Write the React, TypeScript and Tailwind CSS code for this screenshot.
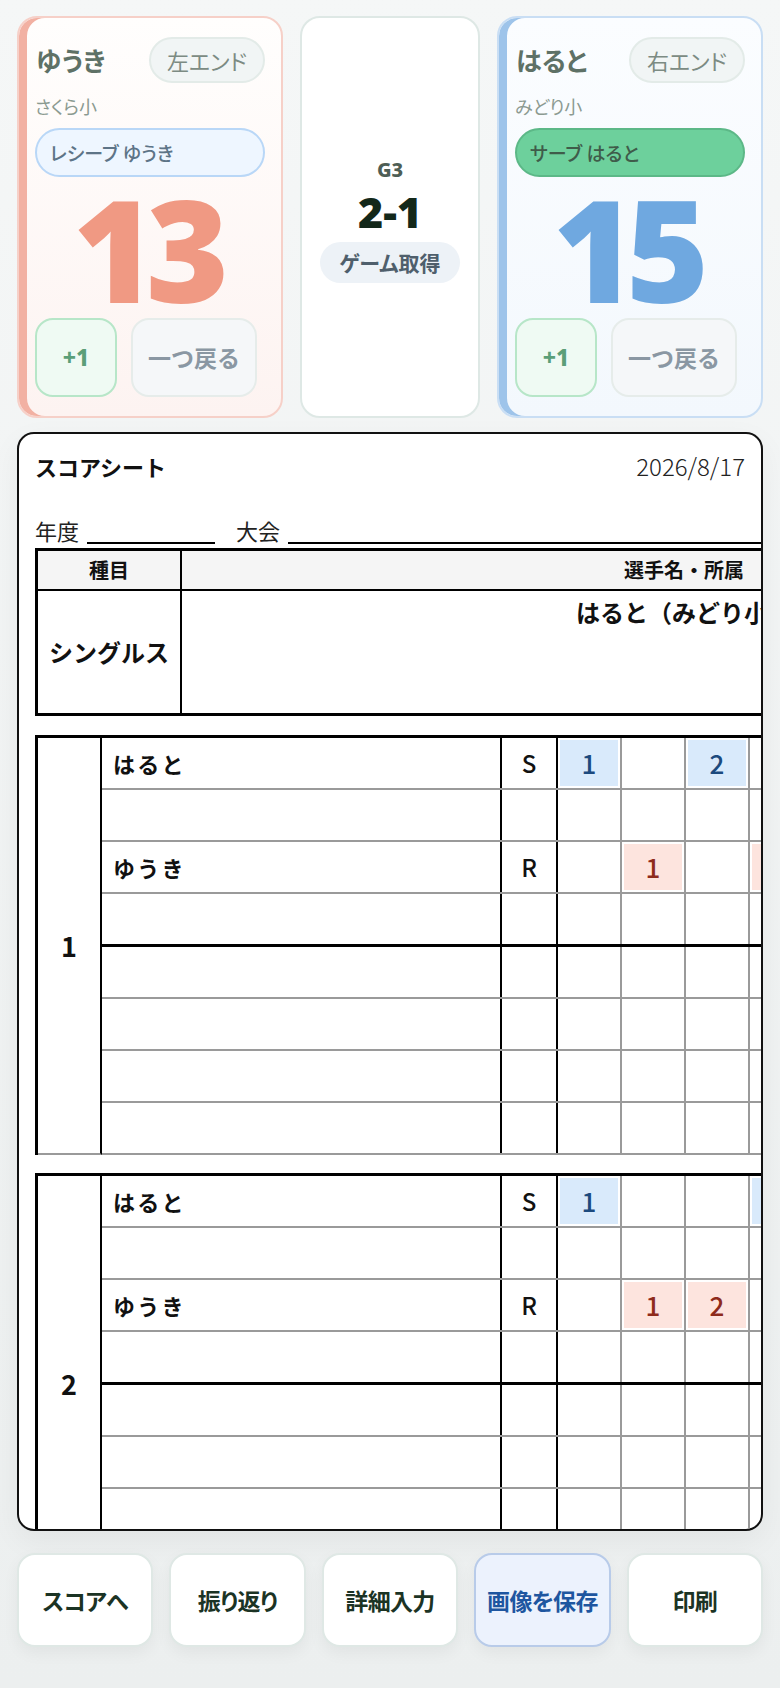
import React from 'react';

type Side = 'left' | 'right';

function PlayerCard(props: {
  side: Side;
  name: string;
  end: string;
  school: string;
  serveLabel: string;
  serving: boolean;
  score: number;
}) {
  const { side, name, end, school, serveLabel, serving, score } = props;
  const cardCls =
    side === 'left'
      ? 'border-[#f6d0c8] bg-gradient-to-b from-[#fffefd] to-[#fdf3f1] shadow-[inset_8px_0_0_0_#f2b1a3]'
      : 'border-[#c9def4] bg-gradient-to-b from-[#fbfdff] to-[#f3f8fd] shadow-[inset_8px_0_0_0_#9ec4ea]';
  const scoreCls = side === 'left' ? 'text-[#f09983]' : 'text-[#6fa8e0]';
  const pillCls = serving
    ? 'bg-[#6dd09c] border-[#5cb887] text-[#3f5c4a]'
    : 'bg-[#eef6ff] border-[#b9d7f7] text-[#5d7487]';
  return (
    <div className={`h-[402px] rounded-[20px] border-2 px-4 pt-[19px] pb-[19px] flex flex-col ${cardCls}`}>
      <div className="flex items-center justify-between h-[46px]">
        <span className="pl-px text-[26px] font-semibold text-[#5e7166] leading-none">{name}</span>
        <span className="h-[46px] px-[16px] flex items-center rounded-full border-2 border-[#e3ebe8] bg-[#f1f5f5] text-[22px] text-[#7c8b83] leading-none">
          {end}
        </span>
      </div>
      <div className="mt-[11px] text-[18px] leading-[24px] text-[#8b9a91]">{school}</div>
      <div className={`mt-[10px] h-[49px] rounded-full border-2 flex items-center pl-[13px] text-[19px] font-medium leading-none ${pillCls}`}>
        {serveLabel}
      </div>
      <div className="h-[141px] flex items-center justify-center">
        <span className={`font-['Noto_Sans',sans-serif] text-[142px] font-black leading-none tracking-[-0.07em] pr-[8px] ${scoreCls}`}>{score}</span>
      </div>
      <div className="flex gap-[14px] h-[79px]">
        <button className="w-[82px] h-full rounded-[18px] border-2 border-[#b7e6c8] bg-[#effaf3] font-['Noto_Sans',sans-serif] text-[23px] font-extrabold text-[#5b9f78]">
          +1
        </button>
        <button className="w-[126px] h-full rounded-[18px] border-2 border-[#e6ecea] bg-[#f5f7f9] text-[23px] font-semibold text-[#8a97a3] [font-feature-settings:normal]">
          一つ戻る
        </button>
      </div>
    </div>
  );
}

function CenterCard() {
  return (
    <div className="h-[402px] rounded-[20px] border-2 border-[#dee8e5] bg-white flex flex-col items-center justify-center pt-[6px]">
      <div className="font-['Noto_Sans',sans-serif] text-[20px] font-extrabold text-[#4e5e55] leading-[24px]">G3</div>
      <div className="mt-[8px] font-['Noto_Sans',sans-serif] text-[43px] font-black text-[#13281a] leading-[44px]">2-1</div>
      <div className="mt-[8px] h-[41px] w-[140px] rounded-full bg-[#edf2f7] flex items-center justify-center text-[21px] font-semibold text-[#4f5f6c] leading-none">
        ゲーム取得
      </div>
    </div>
  );
}

type Marks = { [col: number]: string };

function ScoreCell({ v, kind }: { v?: string; kind: 'S' | 'R' }) {
  return (
    <div className="w-[64px] h-full shrink-0 border-r-2 border-[#9a9a9a] p-[2px]">
      {v ? (
        <div
          className={
            kind === 'S'
              ? 'h-full flex items-center justify-center bg-[#d9eafb] text-[#1c4a7e] text-[26px] font-medium leading-none'
              : 'h-full flex items-center justify-center bg-[#fde4de] text-[#8e2b1c] text-[26px] font-medium leading-none'
          }
        >
          {v}
        </div>
      ) : null}
    </div>
  );
}

function GameRow({
  idx,
  name,
  role,
  marks,
}: {
  idx: number;
  name?: string;
  role?: 'S' | 'R';
  marks?: Marks;
}) {
  const cols = Array.from({ length: 10 }, (_, i) => i + 1);
  return (
    <div
      className={
        idx === 3
          ? 'flex h-[53px] border-b-[3px] border-black'
          : 'flex h-[52px] border-b-2 border-[#9a9a9a]'
      }
    >
      <div className="w-[400px] shrink-0 h-full border-r-2 border-black pl-[11px] flex items-center text-[22px] font-bold tracking-[0.1em] leading-none text-[#111]">
        {name}
      </div>
      <div className="w-[56px] shrink-0 h-full border-r-2 border-black flex items-center justify-center text-[24px] font-medium leading-none text-[#111]">
        {role}
      </div>
      {cols.map((c) => (
        <ScoreCell key={c} v={marks ? marks[c] : undefined} kind={role === 'R' ? 'R' : 'S'} />
      ))}
    </div>
  );
}

function GameTable({
  no,
  sMarks,
  rMarks,
  className,
}: {
  no: number;
  sMarks: Marks;
  rMarks: Marks;
  className: string;
}) {
  return (
    <div className={`flex border-t-[3px] border-l-[3px] border-black ${className}`}>
      <div className="w-[64px] shrink-0 border-r-2 border-r-black border-b-2 border-b-[#9a9a9a] flex items-center justify-center text-[27px] font-semibold leading-none text-[#111]">
        {no}
      </div>
      <div className="flex flex-col">
        <GameRow idx={0} name="はると" role="S" marks={sMarks} />
        <GameRow idx={1} />
        <GameRow idx={2} name="ゆうき" role="R" marks={rMarks} />
        <GameRow idx={3} />
        <GameRow idx={4} />
        <GameRow idx={5} />
        <GameRow idx={6} />
        <GameRow idx={7} />
      </div>
    </div>
  );
}

function ScoreSheet() {
  return (
    <div className="mt-[14px] h-[1099px] rounded-[17px] border-2 border-[#111] bg-white overflow-hidden shadow-[0_10px_30px_rgba(0,0,0,0.05)]">
      <div className="px-4 pt-[17px]">
        <div className="flex items-center justify-between leading-[30px]">
          <span className="text-[22px] font-bold text-[#111]">スコアシート</span>
          <span className="text-[24px] font-light text-[#222]">2026/8/17</span>
        </div>
        <div className="w-[1190px]">
          <div className="mt-[35px] flex items-end text-[22px] leading-[28px] text-[#222]">
            <span>年度</span>
            <span className="ml-[8px] w-[128px] h-[26px] border-b-2 border-black"></span>
            <span className="ml-[21px]">大会</span>
            <span className="ml-[8px] w-[900px] h-[26px] border-b-2 border-black"></span>
          </div>
          <div className="mt-[4px] border-[3px] border-black">
            <div className="flex h-[40px] border-b-2 border-black bg-[#f5f5f5]">
              <div className="w-[144px] shrink-0 border-r-2 border-black flex items-center justify-center text-[20px] font-bold text-[#111]">
                種目
              </div>
              <div className="w-[1004px] shrink-0 flex items-center justify-center text-[20px] font-bold text-[#111]">
                選手名・所属
              </div>
            </div>
            <div className="flex h-[122px]">
              <div className="w-[144px] shrink-0 border-r-2 border-black flex items-center justify-center text-[24px] font-bold text-[#111]">
                シングルス
              </div>
              <div className="w-[1004px] shrink-0 pt-[3px] text-center text-[24px] font-bold text-[#111]">
                はると（みどり小）
              </div>
            </div>
          </div>
          <GameTable no={1} sMarks={{ 1: '1', 3: '2', 5: '3' }} rMarks={{ 2: '1', 4: '2' }} className="mt-[19px]" />
          <GameTable no={2} sMarks={{ 1: '1', 4: '2' }} rMarks={{ 2: '1', 3: '2' }} className="mt-[18px]" />
        </div>
      </div>
    </div>
  );
}

function BottomButtons() {
  const items = ['スコアへ', '振り返り', '詳細入力', '画像を保存', '印刷'];
  return (
    <div className="mt-[22px] grid grid-cols-5 gap-[16px]">
      {items.map((t) => (
        <button
          key={t}
          className={
            t === '画像を保存'
              ? 'h-[94px] rounded-[18px] border-2 border-[#b8cbe9] bg-[#ecf2fd] text-[23px] font-bold tracking-[-0.03em] text-[#1e56a0] shadow-[0_6px_16px_rgba(0,0,0,0.05)] [font-feature-settings:"palt"]'
              : 'h-[94px] rounded-[18px] border-2 border-[#dfe8e5] bg-white text-[23px] font-bold tracking-[-0.03em] text-[#1b3324] shadow-[0_6px_16px_rgba(0,0,0,0.05)] [font-feature-settings:"palt"]'
          }
        >
          {t}
        </button>
      ))}
    </div>
  );
}

export default function App() {
  return (
    <div className="w-[780px] min-h-[1688px] bg-gradient-to-b from-[#f5f7f7] to-[#ecefef] px-[17px] pt-[16px] font-['Noto_Sans_CJK_JP','Noto_Sans',sans-serif]">
      <div className="grid grid-cols-[266px_1fr_266px] gap-[17px] [font-feature-settings:'palt']">
        <PlayerCard side="left" name="ゆうき" end="左エンド" school="さくら小" serveLabel="レシーブ ゆうき" serving={false} score={13} />
        <CenterCard />
        <PlayerCard side="right" name="はると" end="右エンド" school="みどり小" serveLabel="サーブ はると" serving={true} score={15} />
      </div>
      <ScoreSheet />
      <BottomButtons />
    </div>
  );
}
